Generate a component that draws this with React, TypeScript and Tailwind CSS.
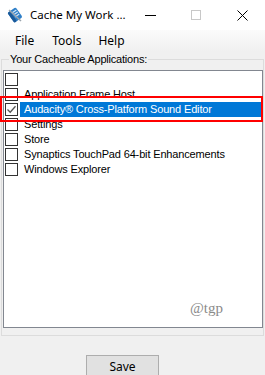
import React from "react";

const items = [
  "",
  "Application Frame Host",
  "Audacity\u00AE Cross-Platform Sound Editor",
  "Settings",
  "Store",
  "Synaptics TouchPad 64-bit Enhancements",
  "Windows Explorer",
];

const ui = { fontFamily: '"Noto Sans", "Open Sans", sans-serif' };
const ms = { fontFamily: '"Liberation Sans", Arial, sans-serif' };

function AppIcon() {
  return (
    <svg width="16" height="16" viewBox="0 0 16 16">
      <g transform="rotate(-35 8 8)">
        <rect x="3" y="2" width="10" height="12" rx="1.5" fill="#2f7fc8" />
        <rect x="3" y="2" width="3" height="12" rx="1" fill="#1b5a9a" />
        <rect x="7" y="4" width="5" height="1.2" fill="#cfe6fa" />
        <rect x="7" y="6.5" width="5" height="1.2" fill="#cfe6fa" />
        <rect x="7" y="9" width="5" height="1.2" fill="#cfe6fa" />
      </g>
      <line x1="2" y1="3" x2="14" y2="14" stroke="#9aa4ad" strokeWidth="1.5" />
    </svg>
  );
}

function Check({ checked }: { checked: boolean }) {
  return (
    <div className="w-[13px] h-[13px] border border-[#333333] bg-white flex items-center justify-center shrink-0">
      {checked && (
        <svg width="11" height="11" viewBox="0 0 11 11">
          <path d="M1.5 5.5 L4.2 8.2 L9.5 2.2" fill="none" stroke="#555555" strokeWidth="1.3" />
        </svg>
      )}
    </div>
  );
}

export default function App() {
  return (
    <div className="relative w-[265px] h-[375px] bg-[#f0f0f0] overflow-hidden flex flex-col">
      {/* title bar */}
      <div className="h-[30px] bg-white flex items-center shrink-0">
        <div className="ml-[7px] w-[16px] h-[16px] shrink-0">
          <AppIcon />
        </div>
        <div className="ml-[7px] text-[11.5px] text-black flex-1 min-w-0 whitespace-nowrap" style={ui}>
          Cache My Work ...
        </div>
        <div className="flex h-full shrink-0">
          <div className="w-[46px] h-full flex items-center justify-center">
            <div className="w-[11px] h-px bg-black" />
          </div>
          <div className="w-[46px] h-full flex items-center justify-center">
            <div className="w-[10px] h-[10px] border border-[#c8c8c8]" />
          </div>
          <div className="w-[46px] h-full flex items-center justify-center">
            <svg width="11" height="11" viewBox="0 0 11 11">
              <path d="M0.5 0.5 L10.5 10.5 M10.5 0.5 L0.5 10.5" stroke="#000" strokeWidth="1" />
            </svg>
          </div>
        </div>
      </div>
      {/* menu bar */}
      <div
        className="h-[22px] flex items-center shrink-0 bg-gradient-to-b from-[#fbfbfb] to-[#f0f0f0] text-[12px] text-black"
        style={ui}
      >
        <span className="ml-[15px]">File</span>
        <span className="ml-[18px]">Tools</span>
        <span className="ml-[17px]">Help</span>
      </div>
      {/* group box */}
      <div className="relative mt-[7px] mx-[1px] h-[277px] border border-[#dcdcdc] shrink-0">
        <div
          className="absolute left-[7px] -top-[9px] px-px bg-[#f0f0f0] text-[11px] leading-[16px] tracking-[-0.2px] text-black"
          style={ms}
        >
          Your Cacheable Applications:
        </div>
        <div className="relative mt-[10px] ml-px mr-0 h-[258px] border border-[#828790] bg-white pt-px">
          {items.map((t, i) => (
            <div key={i} className="h-[15px] flex items-center">
              <div className="ml-px">
                <Check checked={i === 2} />
              </div>
              <div
                className={`ml-[2px] h-[15px] flex-1 flex items-center pl-[4px] text-[11px] tracking-[-0.15px] whitespace-nowrap ${
                  i === 2 ? "bg-[#0078d7] text-white" : "text-black"
                }`}
                style={ms}
              >
                {t}
              </div>
            </div>
          ))}
          <div
            className="absolute left-[186px] top-[226px] text-[15px] text-[#8a8a8a]"
            style={{ fontFamily: '"Liberation Serif", "DejaVu Serif", serif' }}
          >
            @tgp
          </div>
        </div>
      </div>
      {/* save button */}
      <div className="mt-[19px] ml-[86px] w-[73px] h-[24px] bg-[#e1e1e1] border border-[#adadad] flex items-center justify-center shrink-0">
        <span className="text-[12px] text-black" style={ui}>
          Save
        </span>
      </div>
      {/* red highlight annotation */}
      <div className="absolute left-0 top-[96px] w-[263px] h-[26px] border-2 border-[#ff0000] pointer-events-none" />
    </div>
  );
}
